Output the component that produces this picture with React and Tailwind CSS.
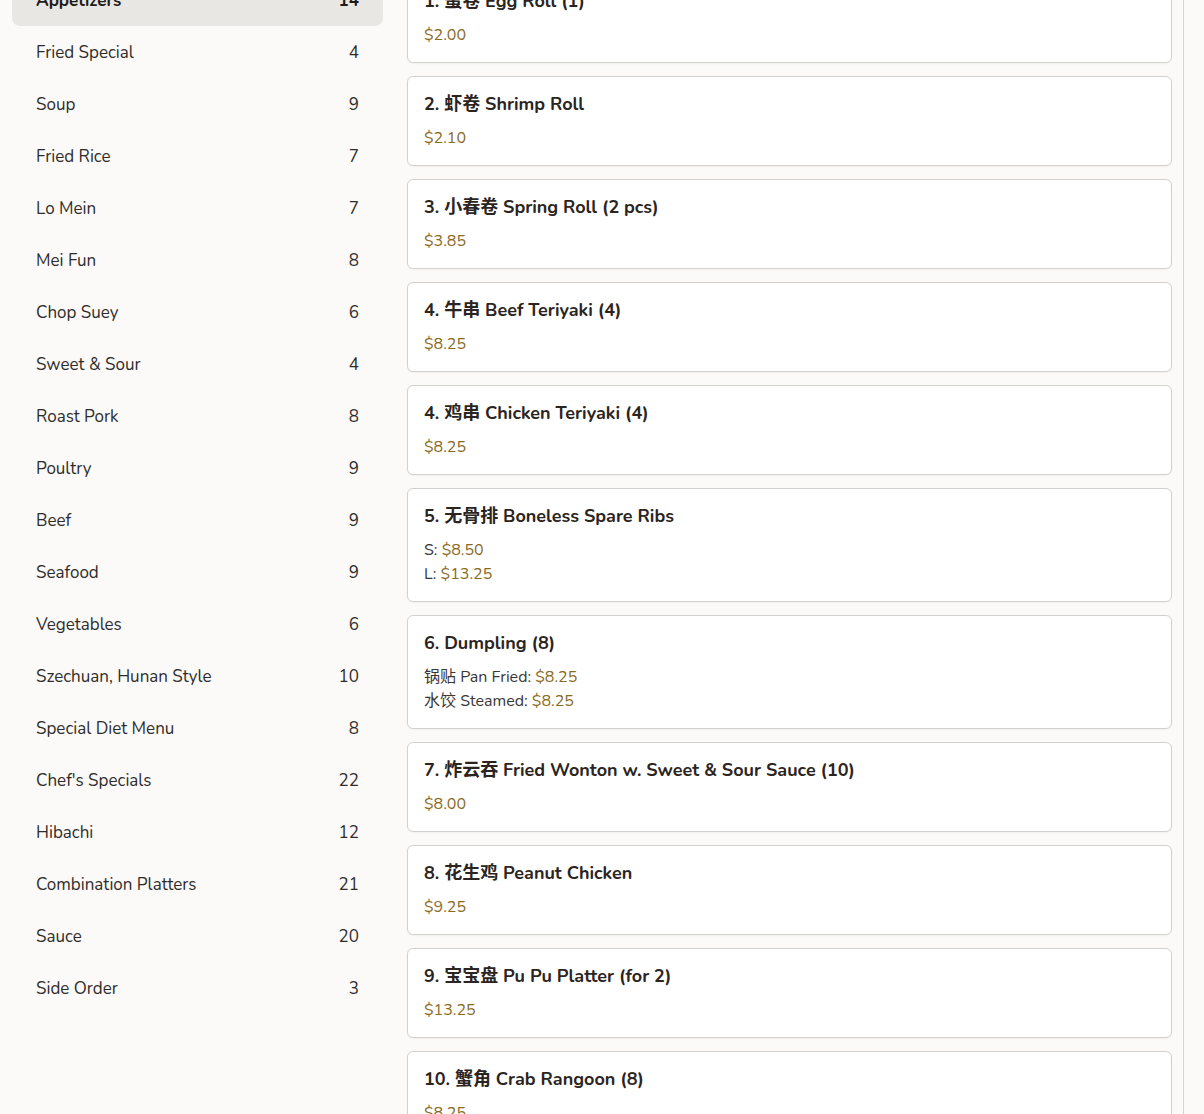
const categories = [
  { name: 'Appetizers', count: 14, active: true },
  { name: 'Fried Special', count: 4 },
  { name: 'Soup', count: 9 },
  { name: 'Fried Rice', count: 7 },
  { name: 'Lo Mein', count: 7 },
  { name: 'Mei Fun', count: 8 },
  { name: 'Chop Suey', count: 6 },
  { name: 'Sweet & Sour', count: 4 },
  { name: 'Roast Pork', count: 8 },
  { name: 'Poultry', count: 9 },
  { name: 'Beef', count: 9 },
  { name: 'Seafood', count: 9 },
  { name: 'Vegetables', count: 6 },
  { name: 'Szechuan, Hunan Style', count: 10 },
  { name: 'Special Diet Menu', count: 8 },
  { name: "Chef's Specials", count: 22 },
  { name: 'Hibachi', count: 12 },
  { name: 'Combination Platters', count: 21 },
  { name: 'Sauce', count: 20 },
  { name: 'Side Order', count: 3 },
];

const items = [
  { title: '1. 蛋卷 Egg Roll (1)', prices: [{ price: '$2.00' }] },
  { title: '2. 虾卷 Shrimp Roll', prices: [{ price: '$2.10' }] },
  { title: '3. 小春卷 Spring Roll (2 pcs)', prices: [{ price: '$3.85' }] },
  { title: '4. 牛串 Beef Teriyaki (4)', prices: [{ price: '$8.25' }] },
  { title: '4. 鸡串 Chicken Teriyaki (4)', prices: [{ price: '$8.25' }] },
  {
    title: '5. 无骨排 Boneless Spare Ribs',
    prices: [
      { label: 'S:', price: '$8.50' },
      { label: 'L:', price: '$13.25' },
    ],
  },
  {
    title: '6. Dumpling (8)',
    prices: [
      { label: '锅贴 Pan Fried:', price: '$8.25' },
      { label: '水饺 Steamed:', price: '$8.25' },
    ],
  },
  { title: '7. 炸云吞 Fried Wonton w. Sweet & Sour Sauce (10)', prices: [{ price: '$8.00' }] },
  { title: '8. 花生鸡 Peanut Chicken', prices: [{ price: '$9.25' }] },
  { title: '9. 宝宝盘 Pu Pu Platter (for 2)', prices: [{ price: '$13.25' }] },
  { title: '10. 蟹角 Crab Rangoon (8)', prices: [{ price: '$8.25' }] },
];

// one menu entry: bold title, then one or more price lines
const MenuCard = ({ item }) => (
  <div className="rounded-md border border-[#d3d1ce] bg-white px-4 pt-[17px] pb-[15px] shadow-[0_1px_2px_rgba(0,0,0,0.04)]">
    <h3 className="text-[18px] font-bold leading-[20px] text-[#2b2420]">{item.title}</h3>
    <div className="mt-3">
      {item.prices.map((p, i) => (
        <p key={i} className="text-[16px] leading-[24px] text-[#3a3633]">
          {p.label && <span>{p.label} </span>}
          <span className="text-[#8a6a1e]">{p.price}</span>
        </p>
      ))}
    </div>
  </div>
);

export default function App() {
  return (
    <div className="h-[1114px] overflow-hidden bg-[#fbfaf8] font-['Nunito','Lato','Noto_Sans_CJK_SC',sans-serif]">
      <div className="-mt-[27px] flex pl-3 pr-5">
        <aside className="w-[371px] shrink-0 pt-[3px]">
          <nav className="flex flex-col gap-[2px]">
            {categories.map((c) => (
              <div
                key={c.name}
                className={`flex h-[50px] items-center justify-between rounded-lg px-6 text-[17px] ${
                  c.active ? 'bg-[#e8e7e4] font-bold text-[#1f1b18]' : 'text-[#2e2c2b]'
                }`}
              >
                <span>{c.name}</span>
                <span>{c.count}</span>
              </div>
            ))}
          </nav>
        </aside>
        <main className="ml-6 flex-1 border-r border-[#d6d4d1] pr-[11px]">
          <div className="flex flex-col gap-[13px]">
            {items.map((item) => (
              <MenuCard key={item.title} item={item} />
            ))}
          </div>
        </main>
      </div>
    </div>
  );
}
